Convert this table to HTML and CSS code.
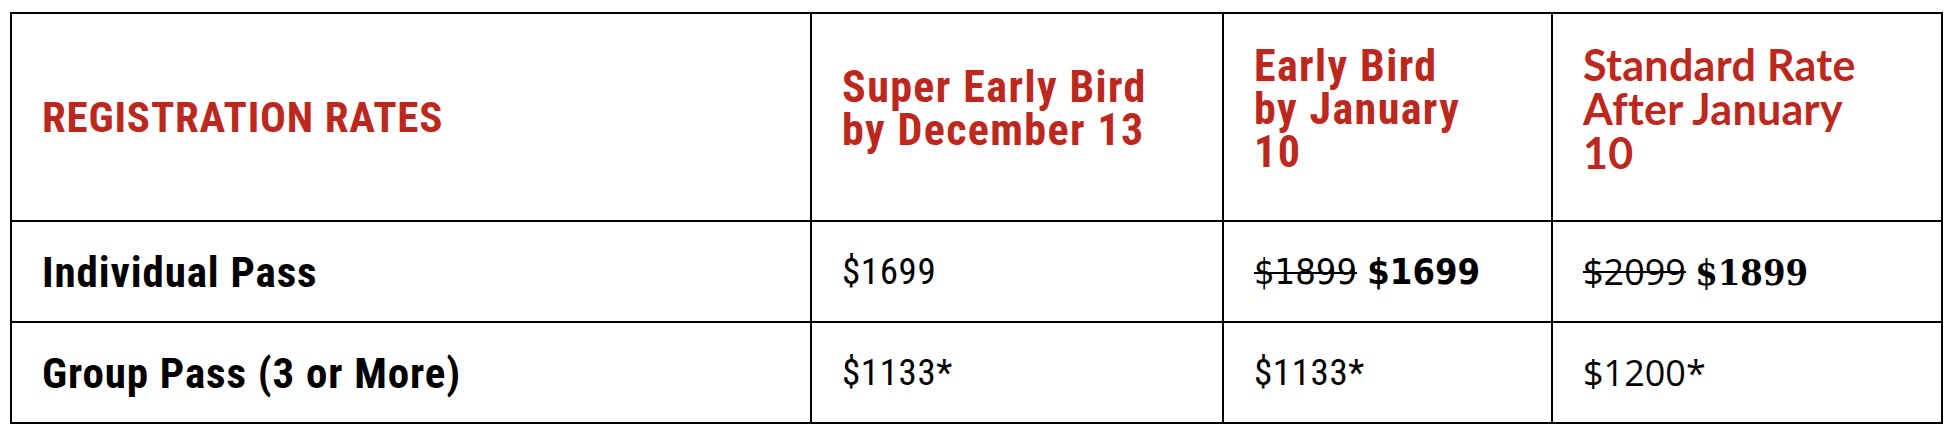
FILE: index.html
```html
<!DOCTYPE html>
<html lang="en">
<head>
<meta charset="utf-8">
<title>Registration Rates</title>
<link rel="stylesheet" href="styles.css">
</head>
<body>
<div class="page">
  <table class="rates">
    <colgroup>
      <col class="c-label">
      <col class="c-super">
      <col class="c-early">
      <col class="c-std">
    </colgroup>
    <thead>
      <tr class="head-row">
        <th class="h-title">REGISTRATION RATES</th>
        <th class="h-cond">Super Early Bird<br>by December 13</th>
        <th class="h-cond">Early Bird<br>by January<br>10</th>
        <th class="h-wide">Standard Rate<br>After January<br>10</th>
      </tr>
    </thead>
    <tbody>
      <tr class="body-row">
        <td class="label">Individual Pass</td>
        <td class="price-cond">$1699</td>
        <td class="price-mix"><s class="old">$1899</s> <strong class="new">$1699</strong></td>
        <td class="price-std"><s class="old">$2099</s> <strong class="new-serif">$1899</strong></td>
      </tr>
      <tr class="body-row">
        <td class="label">Group Pass (3 or More)</td>
        <td class="price-cond">$1133*</td>
        <td class="price-cond">$1133*</td>
        <td class="price-std">$1200*</td>
      </tr>
    </tbody>
  </table>
</div>
</body>
</html>
```
FILE: styles.css
```css
html, body {
  margin: 0;
  padding: 0;
  background: #ffffff;
}

.page {
  padding: 12px 13px 0 10px;
}

.rates {
  width: 1933px;
  border-collapse: collapse;
  table-layout: fixed;
  border: 2px solid #000;
}

.c-label { width: 800px; }
.c-super { width: 412px; }
.c-early { width: 329px; }
.c-std { width: 390px; }

.rates th,
.rates td {
  border: 2px solid #000;
  padding: 0 10px 0 30px;
  text-align: left;
  vertical-align: middle;
}

.head-row th {
  color: #bc281e;
  font-weight: 700;
}

.head-row .h-title {
  height: 206px;
  font-family: "Roboto Condensed", "Roboto", sans-serif;
  font-stretch: condensed;
  font-size: 43px;
  line-height: 43px;
  letter-spacing: 0.8px;
}

.head-row .h-cond {
  font-family: "Roboto Condensed", "Roboto", sans-serif;
  font-stretch: condensed;
  font-size: 44px;
  line-height: 43px;
  letter-spacing: 1.4px;
  padding-bottom: 16px;
}

.head-row .h-wide {
  font-family: "Lato", sans-serif;
  font-size: 43px;
  line-height: 44px;
  letter-spacing: 0.3px;
  padding-bottom: 16px;
}

.body-row td {
  height: 99px;
  color: #000;
}

.label {
  font-family: "Roboto Condensed", "Roboto", sans-serif;
  font-stretch: condensed;
  font-weight: 700;
  font-size: 43px;
  letter-spacing: 0.9px;
}

.price-cond {
  font-family: "Roboto Condensed", "Roboto", sans-serif;
  font-stretch: condensed;
  font-weight: 400;
  font-size: 37px;
  letter-spacing: 0.6px;
}

.price-mix {
  font-family: "DejaVu Sans", sans-serif;
  font-stretch: condensed;
  font-size: 36px;
}

.price-mix .new {
  font-weight: 700;
}

.price-std {
  font-family: "Open Sans", sans-serif;
  font-size: 36px;
}

.old {
  text-decoration: line-through;
  text-decoration-thickness: 2px;
}

.new-serif {
  font-family: "DejaVu Serif", serif;
  font-stretch: condensed;
  font-weight: 700;
}
```
